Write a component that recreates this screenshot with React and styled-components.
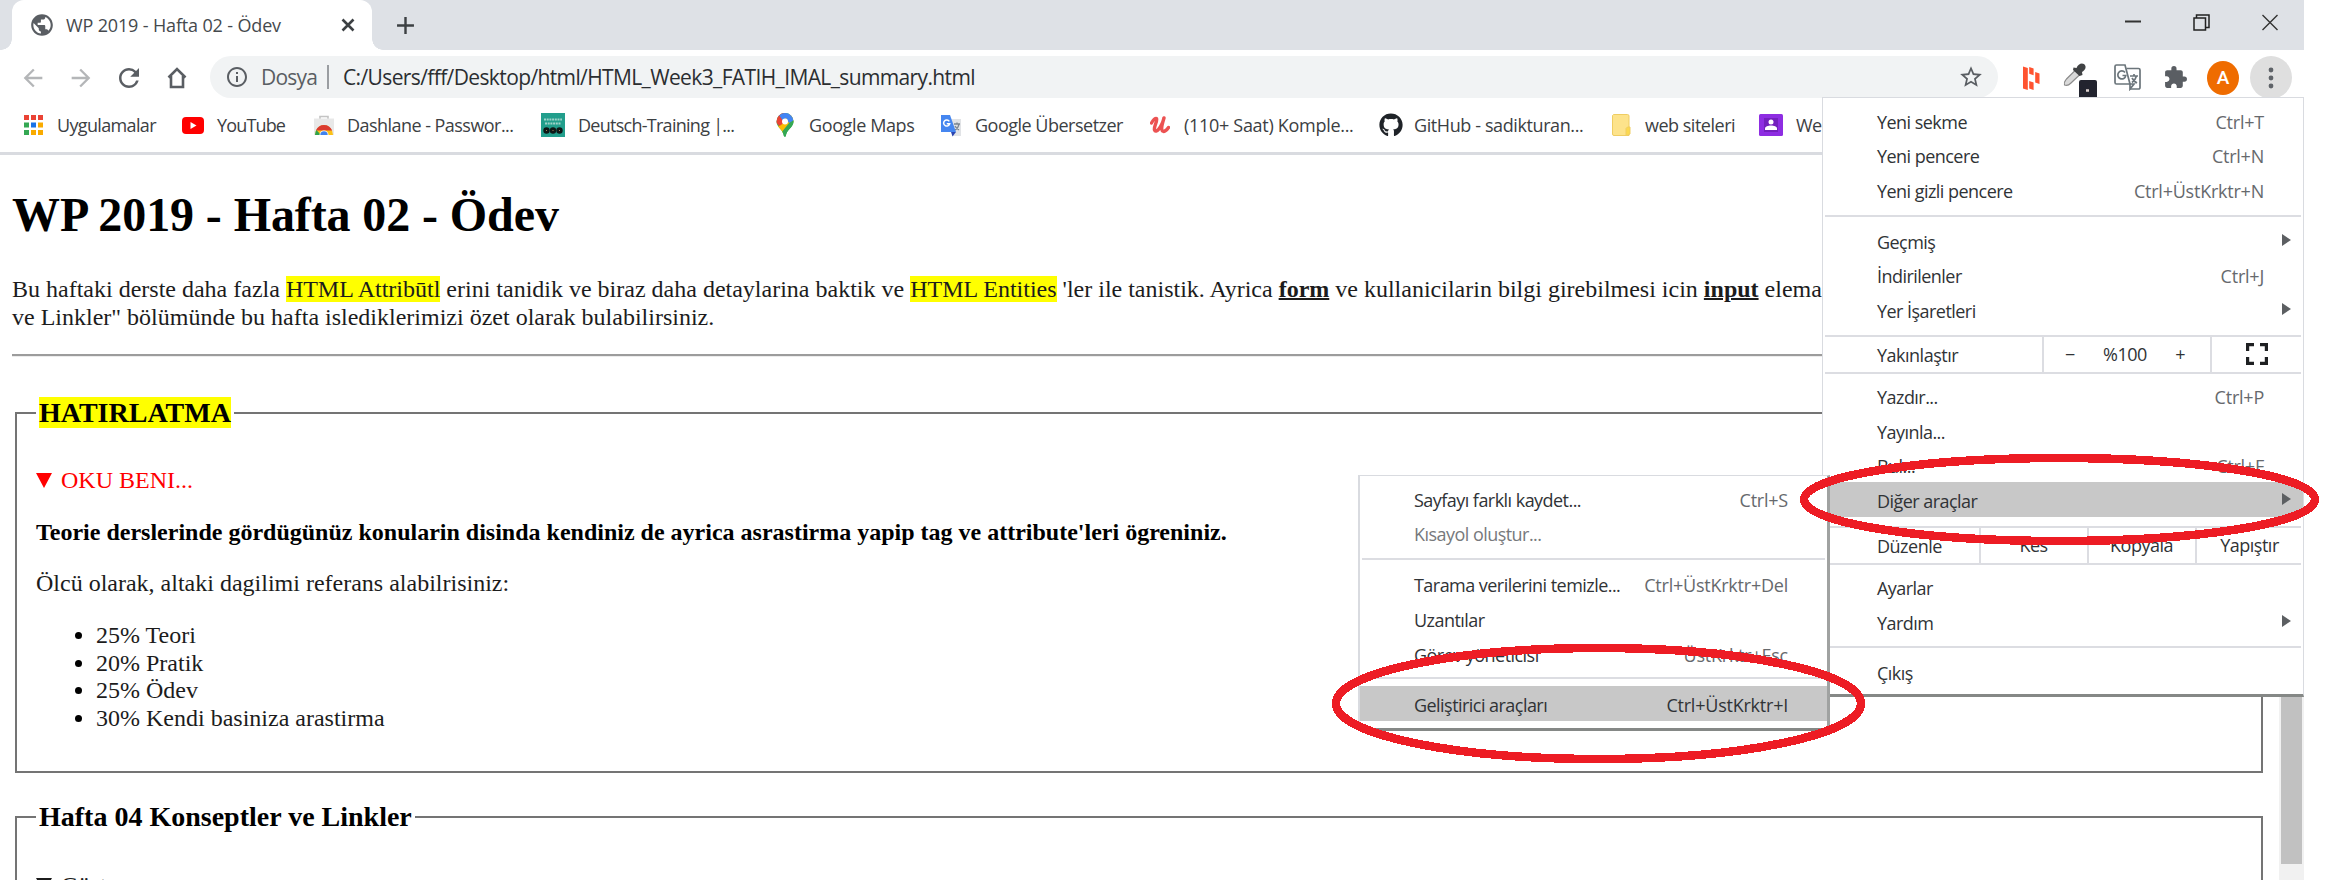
import React from 'react';
import styled, { createGlobalStyle } from 'styled-components';
import {
  MdPublic, MdArrowBack, MdArrowForward, MdRefresh, MdInfoOutline, MdStarBorder,
  MdExtension, MdAdd,
} from 'react-icons/md';
import { FaGithub } from 'react-icons/fa';

const GlobalStyle = createGlobalStyle`
  * { box-sizing: border-box; }
  body { margin: 0; background: #fff; overflow: hidden; }
`;

const ui = '"Open Sans", "Noto Sans", sans-serif';

const Screen = styled.div`
  position: relative;
  width: 2340px;
  height: 880px;
  overflow: hidden;
  background: #fff;
`;

const Browser = styled.div`
  display: flex;
  flex-direction: column;
  width: 2304px;
  height: 880px;
  font-family: ${ui};
  color: #3c4043;
`;

/* ---------- tab strip ---------- */

const TabStrip = styled.header`
  display: flex;
  align-items: center;
  flex: none;
  height: 50px;
  padding-left: 12px;
  background: #dee1e6;
`;

const Tab = styled.div`
  position: relative;
  display: flex;
  align-items: center;
  width: 360px;
  height: 50px;
  padding: 0 17px 0 17px;
  border-radius: 12px 12px 0 0;
  background: #fff;
  color: #45494d;

  &::before, &::after {
    content: '';
    position: absolute;
    bottom: 0;
    width: 11px;
    height: 11px;
  }
  &::before { left: -11px; background: radial-gradient(circle at 0 0, #dee1e6 10.5px, #fff 11px); }
  &::after { right: -11px; background: radial-gradient(circle at 100% 0, #dee1e6 10.5px, #fff 11px); }
`;

const TabTitle = styled.span`
  flex: 1;
  margin-left: 11px;
  padding-bottom: 1px;
  font-size: 18px;
  letter-spacing: -0.15px;
  white-space: nowrap;
`;

const NewTab = styled.div`
  display: flex;
  margin-left: 19px;
  color: #3c4043;
`;

const WindowControls = styled.div`
  display: flex;
  gap: 52px;
  margin-left: auto;
  margin-right: 26px;
  align-items: center;
  padding-bottom: 6px;
`;

/* ---------- toolbar ---------- */

const Toolbar = styled.div`
  display: flex;
  flex: none;
  height: 49px;
  padding: 6px 9px 0;
`;

const ToolButton = styled.div`
  display: flex;
  align-items: center;
  justify-content: center;
  flex: none;
  width: 48px;
  height: 43px;
  color: ${(p) => (p.$dim ? '#b4b6b8' : '#5a5e63')};
`;

const Omnibox = styled.div`
  display: flex;
  align-items: center;
  flex: none;
  width: 1788px;
  height: 42px;
  margin: 0 9px;
  padding: 0 14px 0 15px;
  border-radius: 21px;
  background: #f1f3f4;
  color: #5a5e63;
  font-size: 21px;
`;

const Scheme = styled.span`
  width: 66px;
  margin-left: 12px;
  letter-spacing: -0.8px;
`;

const Divider = styled.i`
  width: 2px;
  height: 24px;
  background: #9a9da1;
`;

const Address = styled.span`
  flex: 1;
  margin-left: 14px;
  color: #2b2e31;
  letter-spacing: -0.62px;
`;

const Avatar = styled.div`
  display: flex;
  align-items: center;
  justify-content: center;
  width: 32px;
  height: 34px;
  border-radius: 50%;
  background: #ef6c00;
  color: #fff;
  font: 500 19px Roboto, sans-serif;
`;

const MenuTrigger = styled.div`
  display: flex;
  align-items: center;
  justify-content: center;
  flex: none;
  width: 42px;
  height: 43px;
  border-radius: 50%;
  background: #dfdfdf;
`;

/* ---------- bookmarks ---------- */

const BookmarkBar = styled.nav`
  display: flex;
  align-items: center;
  flex: none;
  height: 56px;
  padding: 0 0 1px 24px;
  border-bottom: 3px solid #d9dbe0;
`;

const Bookmark = styled.div`
  display: flex;
  align-items: center;
  flex: none;
  width: ${(p) => p.$width}px;
  font-size: 18px;
  letter-spacing: ${(p) => p.$track}px;
  white-space: nowrap;
`;

const BookmarkIcon = styled.span`
  display: flex;
  flex: none;
  width: ${(p) => p.$slot}px;
`;

/* ---------- document ---------- */

const Viewport = styled.div`
  display: flex;
  flex: 1;
  min-height: 0;
  overflow: hidden;
`;

const Document = styled.main`
  flex: 1;
  padding: 32px 6px 0 12px;
  color: #000;
  font: 24px/27.7px "Liberation Serif", serif;
`;

const Title = styled.h1`
  margin: 0 0 33px;
  font-size: 48px;
  line-height: 56px;
  letter-spacing: -0.1px;
`;

const Paragraph = styled.p`
  margin: 24px 0;
  color: ${(p) => (p.$strong ? '#000' : '#1c1c1c')};
  font-weight: ${(p) => (p.$strong ? 'bold' : 'normal')};
  white-space: nowrap;
`;

const Mark = styled.mark`
  background: #ff0;
  color: inherit;
`;

const Key = styled.b`
  text-decoration: underline;
  text-decoration-thickness: 2px;
`;

const Rule = styled.hr`
  height: 3px;
  margin: -1px 0 40px;
  border: 0;
  border-top: 2px solid #9c9c9c;
  background: #ececec;
`;

const Section = styled.fieldset`
  width: 2248px;
  margin: 0 0 28px 3px;
  padding: 37.5px 19px 14px;
  border: 2px solid #747474;
`;

const Legend = styled.legend`
  padding: 0 3px;
  font-size: 28px;
  font-weight: bold;
  line-height: 32px;
`;

const Summary = styled.div`
  display: flex;
  align-items: center;
  gap: 9px;
  padding-top: ${(p) => p.$offset || 0}px;
  color: ${(p) => p.$color};
`;

const Caret = styled.i`
  margin-bottom: 1px;
  border: 8.5px solid transparent;
  border-top: 15px solid currentColor;
  border-bottom: 0;
`;

const List = styled.ul`
  margin: 24px 0;
  padding-left: 60px;
  color: #1c1c1c;
  li::marker { color: #000; }
`;

const Scrollbar = styled.aside`
  flex: none;
  width: 25px;
  padding: 0 2px;
  background: #f1f1f1;
`;

const Thumb = styled.div`
  height: 709px;
  background: #c1c1c1;
`;

/* ---------- menus ---------- */

const Menu = styled.div`
  position: absolute;
  left: 1822px;
  top: 97px;
  width: 482px;
  height: 600px;
  padding-top: 5px;
  border: 1px solid #d9dbe0;
  border-bottom: 3px solid #858886;
  background: #fff;
  font: 18px ${ui};
  color: #303336;
`;

const SubMenu = styled(Menu)`
  left: 1358px;
  top: 475px;
  width: 472px;
  height: 256px;
  border-width: 1px 3px 3px 2px;
  border-right-color: #a0a2a1;
`;

const MenuItem = styled.div`
  display: flex;
  align-items: center;
  height: 34.6px;
  padding: 3px 39px 0 54px;
  background: ${(p) => (p.$active ? '#c8c8c8' : 'transparent')};
  color: ${(p) => (p.$disabled ? '#77797c' : 'inherit')};
  letter-spacing: -0.54px;
  white-space: nowrap;
`;

const Shortcut = styled.span`
  margin-left: auto;
  color: ${(p) => (p.$active ? '#303336' : '#66696d')};
  letter-spacing: -0.23px;
`;

const Arrow = styled.i`
  margin: 0 -27px 3px auto;
  border: 6px solid transparent;
  border-left: 9px solid #5c5f62;
  border-right: 0;
`;

const Separator = styled.div`
  height: 2px;
  margin: ${(p) => p.$above}px 2px ${(p) => p.$below}px;
  background: #dcdde2;
`;

const ActionRow = styled.div`
  display: grid;
  grid-template-columns: ${(p) => p.$columns};
  height: ${(p) => p.$height}px;
  padding-left: 2px;
  letter-spacing: -0.5px;
`;

const ActionLabel = styled.span`
  display: flex;
  align-items: center;
  padding: 1px 0 0 52px;
`;

const ActionCell = styled.span`
  display: flex;
  align-items: center;
  justify-content: ${(p) => (p.$spread ? 'space-between' : 'center')};
  padding: 0 ${(p) => (p.$spread ? '25px 1px 21px' : '1px 1px 0')};
  border-left: 2px solid #dcdde2;
`;

const Annotations = styled.svg`
  position: absolute;
  inset: 0;
  pointer-events: none;
`;

/* ---------- icons ---------- */

const TabCloseIcon = () => (
  <svg width="14" height="14" viewBox="0 0 14 14">
    <path d="m1.500 1.500 11 11m0-11-11 11" stroke="#3c4043" strokeWidth="2.600" />
  </svg>
);

const HomeIcon = () => (
  <svg width="20" height="22" viewBox="0 0 20 22">
    <path d="M1.500 10.500 10 2l8.500 8.500M4 9v11h12V9" fill="none" stroke="#5a5e63" strokeWidth="2.600" />
  </svg>
);

const AppsIcon = () => {
  const colors = ['#ea4335', '#ea4335', '#ea4335', '#34a853', '#1a73e8', '#f9ab00', '#34a853', '#f9ab00', '#f9ab00'];
  return (
    <svg width="19" height="20" viewBox="0 0 19 20">
      {colors.map((c, i) => <rect key={i} x={(i % 3) * 7} y={Math.floor(i / 3) * 7.5} width="5" height="5" fill={c} />)}
    </svg>
  );
};

const YouTubeIcon = () => (
  <svg width="22" height="17" viewBox="0 0 22 17">
    <rect width="22" height="17" rx="4" fill="#f00" />
    <path d="M8.500 5v7l6-3.500z" fill="#fff" />
  </svg>
);

const StoreIcon = () => (
  <svg width="20" height="20" viewBox="0 0 20 20">
    <path d="M6 4V1.500h8V4" fill="none" stroke="#c4c4c4" strokeWidth="1.600" />
    <path d="M0 3.500h20V20H0z" fill="#e8e8e8" />
    <path d="M1 20a9 10 0 0 1 18 0z" fill="#fbc116" />
    <path d="M1.800 15.500a9 9.500 0 0 1 16.400 0h-8z" fill="#db3a2f" />
    <path d="M1 20a9 9.500 0 0 1 1.400-5L7 20z" fill="#2fa24c" />
    <path d="M5.500 20a4.500 4.500 0 0 1 9 0z" fill="#fff" />
    <path d="M6.300 20a3.700 3.700 0 0 1 7.400 0z" fill="#3f82ee" />
  </svg>
);

const TrainingIcon = () => (
  <svg width="24" height="24" viewBox="0 0 24 24">
    <rect width="24" height="24" fill="#229e8c" />
    <path d="M3 6.500h18M4 10.500h16" stroke="#9fd2c8" strokeWidth="2" strokeDasharray="2 .7" />
    <circle cx="5.500" cy="17.500" r="3.200" fill="#0d1716" />
    <circle cx="12" cy="17.500" r="3.200" fill="#0d1716" />
    <circle cx="18.500" cy="17.500" r="3.200" fill="#0d1716" />
    <path d="M5 17.500h1M11.500 17.500h1M18 17.500h1" stroke="#a9835e" strokeWidth="1.200" />
  </svg>
);

const PIN = 'M9 0a8.500 8.500 0 0 0-8.500 8.500C.500 14.500 7 16 8 23.500h1.700C10.700 16 17.500 14.500 17.500 8.500A8.500 8.500 0 0 0 9 0z';
const MapsIcon = () => (
  <svg width="18" height="24" viewBox="0 0 18 24">
    <clipPath id="pin"><path d={PIN} /></clipPath>
    <g clipPath="url(#pin)">
      <path d="M0 0h18v24H0z" fill="#34a853" />
      <path d="M-1 17 12 2 20 -2v9L3 24z" fill="#fbbc04" />
      <path d="M5 20 18 4v20H5z" fill="#34a853" />
      <path d="M0 0h9v9L3.500 13-2 8z" fill="#ea4335" />
      <path d="M3 2 9-1h9v8l-5 3-3-5-3 3z" fill="#4285f4" />
    </g>
    <circle cx="9" cy="8.500" r="3" fill="#fff" />
  </svg>
);

const TranslateIcon = () => (
  <svg width="22" height="23" viewBox="0 0 22 23">
    <path d="M9 5h12v17H13z" fill="#e1e3e6" />
    <path d="M14 10h6m-3-1.500V10m2 0c-.5 3-2 5-4 6m0-4c1 2 2.500 3 4 4" fill="none" stroke="#7b858f" strokeWidth="1.300" />
    <path d="M1 1h9l6 17H1z" fill="#4586f0" />
    <path d="m11 18 5 0-3.500 4.500z" fill="#2b45b0" />
    <path d="M9.300 7.300A3.100 3.100 0 1 0 9.700 9.800H6.800" fill="none" stroke="#fff" strokeWidth="1.500" />
  </svg>
);

const UdemyIcon = () => (
  <svg width="20" height="18" viewBox="0 0 20 18">
    <path d="M1.500 7C3 4.500 5 2 6.500 2.500 8 4 3.500 11 4.500 14c1.200 3.500 7-2 9.500-12-1.500 5-3.500 11-1.500 13 1.500 1.200 4-.5 6-3.500" fill="none" stroke="#ec5252" strokeWidth="3.400" strokeLinecap="round" strokeLinejoin="round" />
  </svg>
);

const FolderIcon = () => (
  <svg width="19" height="22" viewBox="0 0 19 22">
    <path d="M1.500.500h14a1.500 1.500 0 0 1 1.500 1.500v19.500h-15A1.500 1.500 0 0 1 .500 20V1.500z" fill="#fde38b" stroke="#efcd62" />
    <path d="M14 21.500v-7l1.500-1.500H18v7z" fill="#fcd94f" stroke="#efcd62" />
  </svg>
);

const ContactIcon = () => (
  <svg width="24" height="22" viewBox="0 0 24 22">
    <rect width="24" height="22" rx="1.500" fill="#8e2de2" />
    <rect x="5" y="4" width="14" height="14" fill="#7420bd" />
    <circle cx="12" cy="8" r="2.500" fill="#fff" />
    <path d="M6 16v-1.500c0-4 12-4 12 0V16z" fill="#fff" />
  </svg>
);

const BarsIcon = () => (
  <svg width="17" height="24" viewBox="0 0 17 24" fill="#ff5330">
    <path d="M0 .500 4.800 2v22L0 22.500zM6.200 1l4.400 1.400v6.800L6.200 7.800zM6.200 15l4.400 1.400V24l-4.400-1.400zM12.200 6l4.300 1.400V18l-4.300-1.400z" />
  </svg>
);

const PickerIcon = () => (
  <svg width="36" height="38" viewBox="3 0 36 38">
    <path d="M6.500 26c-1-3 .5-4 2-6l9-9 4.500 4.500-9 8.500c-2 2-4 3-6.500 2z" fill="#d9d9d9" stroke="#8b8b8b" strokeWidth="1.200" />
    <path d="m15.500 8.500 3 .500c1.500-4 5-5.500 7.500-4 3 2.500 1.500 6-2 8l.5 3-3 1-6.500-6z" fill="#404244" />
    <path d="M21 23a2 2 0 0 1 2-2h14a2 2 0 0 1 2 2V38H21z" fill="#22242f" />
    <path d="M28 31.500h3" stroke="#dfd3d0" strokeWidth="2.500" />
  </svg>
);

const TranslatePageIcon = () => (
  <svg width="27" height="27" viewBox="0 0 27 27" fill="none" stroke="#6b757b" strokeWidth="1.700">
    <path d="M12.500 4.500h12A1.500 1.500 0 0 1 26 6v17.500a1.500 1.500 0 0 1-1.500 1.500H16" />
    <path d="M2.500 1H11l5 19H2.500A1.500 1.500 0 0 1 1 18.500v-16A1.500 1.500 0 0 1 2.500 1zM16 20v5l4-5z" />
    <path d="M11 8.500a4 4 0 1 0 .8 3H8.500M16 12h8m-4-2v2m2.500 0c-.8 3-2.500 5-4.500 6.500m0-4.500c1 2 3 4 5 5" />
  </svg>
);

const MinimizeIcon = () => (
  <svg width="16" height="17" viewBox="0 0 16 17"><path d="M0 7.500h16" stroke="#333" strokeWidth="2" /></svg>
);
const RestoreIcon = () => (
  <svg width="17" height="17" viewBox="0 0 17 17" fill="none" stroke="#222" strokeWidth="1.500">
    <path d="M1 4h11.500v12H1zM3.500 4V1h12.500v12.500h-3.500" />
  </svg>
);
const CloseIcon = () => (
  <svg width="16" height="17" viewBox="0 0 16 17"><path d="m.5 1 15 15m0-15-15 15" stroke="#333" strokeWidth="1.400" /></svg>
);
const DotsIcon = () => (
  <svg width="6" height="22" viewBox="0 0 6 22" fill="#5f6368">
    <circle cx="3" cy="3" r="2.400" /><circle cx="3" cy="11" r="2.400" /><circle cx="3" cy="19" r="2.400" />
  </svg>
);
const FullscreenIcon = () => (
  <svg width="22" height="22" viewBox="0 0 22 22">
    <path d="M1.500 8V1.500H8M14 1.500h6.500V8M20.500 14v6.500H14M8 20.500H1.500V14" fill="none" stroke="#1e2022" strokeWidth="3.400" />
  </svg>
);

/* ---------- data ---------- */

const bookmarks = [
  { label: 'Uygulamalar', icon: <AppsIcon />, width: 158, slot: 33, track: -0.65 },
  { label: 'YouTube', icon: <YouTubeIcon />, width: 132, slot: 35, track: -0.85 },
  { label: 'Dashlane - Passwor...', icon: <StoreIcon />, width: 227, slot: 33, track: -0.54 },
  { label: 'Deutsch-Training |...', icon: <TrainingIcon />, width: 235, slot: 37, track: -0.73 },
  { label: 'Google Maps', icon: <MapsIcon />, width: 164, slot: 33, track: -0.38 },
  { label: 'Google Übersetzer', icon: <TranslateIcon />, width: 210, slot: 35, track: -0.5 },
  { label: '(110+ Saat) Komple...', icon: <UdemyIcon />, width: 229, slot: 34, track: -0.3 },
  { label: 'GitHub - sadikturan...', icon: <FaGithub size={24} color="#1f2328" />, width: 233, slot: 35, track: -0.4 },
  { label: 'web siteleri', icon: <FolderIcon />, width: 147, slot: 33, track: -0.49 },
  { label: 'We', icon: <ContactIcon />, width: 70, slot: 37, track: -0.6 },
];

const Item = ({ label, keys, arrow, active, disabled }) => (
  <MenuItem $active={active} $disabled={disabled}>
    {label}
    {keys && <Shortcut $active={active}>{keys}</Shortcut>}
    {arrow && <Arrow />}
  </MenuItem>
);

export default function App() {
  return (
    <Screen>
      <GlobalStyle />
      <Browser>
        <TabStrip>
          <Tab>
            <MdPublic size={26} color="#5a5e63" />
            <TabTitle>WP 2019 - Hafta 02 - Ödev</TabTitle>
            <TabCloseIcon />
          </Tab>
          <NewTab><MdAdd size={29} /></NewTab>
          <WindowControls><MinimizeIcon /><RestoreIcon /><CloseIcon /></WindowControls>
        </TabStrip>

        <Toolbar>
          <ToolButton $dim><MdArrowBack size={28} /></ToolButton>
          <ToolButton $dim><MdArrowForward size={28} /></ToolButton>
          <ToolButton><MdRefresh size={30} /></ToolButton>
          <ToolButton><HomeIcon /></ToolButton>
          <Omnibox>
            <MdInfoOutline size={24} />
            <Scheme>Dosya</Scheme>
            <Divider />
            <Address>C:/Users/fff/Desktop/html/HTML_Week3_FATIH_IMAL_summary.html</Address>
            <MdStarBorder size={26} />
          </Omnibox>
          <ToolButton><BarsIcon /></ToolButton>
          <ToolButton><PickerIcon /></ToolButton>
          <ToolButton><TranslatePageIcon /></ToolButton>
          <ToolButton><MdExtension size={25} /></ToolButton>
          <ToolButton><Avatar>A</Avatar></ToolButton>
          <ToolButton><MenuTrigger><DotsIcon /></MenuTrigger></ToolButton>
        </Toolbar>

        <BookmarkBar>
          {bookmarks.map((b) => (
            <Bookmark key={b.label} $width={b.width} $track={b.track}>
              <BookmarkIcon $slot={b.slot}>{b.icon}</BookmarkIcon>
              {b.label}
            </Bookmark>
          ))}
        </BookmarkBar>

        <Viewport>
          <Document>
            <Title>WP 2019 - Hafta 02 - Ödev</Title>
            <Paragraph>
              Bu haftaki derste daha fazla <Mark>HTML Attribūtl</Mark> erini tanidik ve biraz daha detaylarina baktik
              ve <Mark>HTML Entities</Mark> 'ler ile tanistik. Ayrica <Key>form</Key> ve kullanicilarin bilgi
              girebilmesi icin <Key>input</Key> elema
              <br />
              ve Linkler" bölümünde bu hafta islediklerimizi özet olarak bulabilirsiniz.
            </Paragraph>
            <Rule />
            <Section>
              <Legend><Mark>HATIRLATMA</Mark></Legend>
              <Summary $color="#f00"><Caret />OKU BENI...</Summary>
              <Paragraph $strong>
                Teorie derslerinde gördügünüz konularin disinda kendiniz de ayrica asrastirma yapip tag ve
                attribute'leri ögreniniz.
              </Paragraph>
              <Paragraph>Ölcü olarak, altaki dagilimi referans alabilrisiniz:</Paragraph>
              <List>
                <li>25% Teori</li>
                <li>20% Pratik</li>
                <li>25% Ödev</li>
                <li>30% Kendi basiniza arastirma</li>
              </List>
            </Section>
            <Section>
              <Legend>Hafta 04 Konseptler ve Linkler</Legend>
              <Summary $color="#1c1c1c" $offset={1.5}><Caret />Göster</Summary>
            </Section>
          </Document>
          <Scrollbar><Thumb /></Scrollbar>
        </Viewport>
      </Browser>

      <Menu>
        <Item label="Yeni sekme" keys="Ctrl+T" />
        <Item label="Yeni pencere" keys="Ctrl+N" />
        <Item label="Yeni gizli pencere" keys="Ctrl+ÜstKrktr+N" />
        <Separator $above={8} $below={6} />
        <Item label="Geçmiş" arrow />
        <Item label="İndirilenler" keys="Ctrl+J" />
        <Item label="Yer İşaretleri" arrow />
        <Separator $above={8.2} $below={0} />
        <ActionRow $columns="217px 168px 1fr" $height={35.5}>
          <ActionLabel>Yakınlaştır</ActionLabel>
          <ActionCell $spread><span>−</span><span>%100</span><span>+</span></ActionCell>
          <ActionCell><FullscreenIcon /></ActionCell>
        </ActionRow>
        <Separator $above={0} $below={4} />
        <Item label="Yazdır..." keys="Ctrl+P" />
        <Item label="Yayınla..." />
        <Item label="Bul..." keys="Ctrl+F" />
        <Item label="Diğer araçlar" arrow active />
        <Separator $above={9.5} $below={0} />
        <ActionRow $columns="154px 108px 108px 1fr" $height={35}>
          <ActionLabel>Düzenle</ActionLabel>
          <ActionCell>Kes</ActionCell>
          <ActionCell>Kopyala</ActionCell>
          <ActionCell>Yapıştır</ActionCell>
        </ActionRow>
        <Separator $above={0} $below={4} />
        <Item label="Ayarlar" />
        <Item label="Yardım" arrow />
        <Separator $above={7.5} $below={6.5} />
        <Item label="Çıkış" />
      </Menu>

      <SubMenu>
        <Item label="Sayfayı farklı kaydet..." keys="Ctrl+S" />
        <Item label="Kısayol oluştur..." disabled />
        <Separator $above={7.5} $below={7} />
        <Item label="Tarama verilerini temizle..." keys="Ctrl+ÜstKrktr+Del" />
        <Item label="Uzantılar" />
        <Item label="Görev yöneticisi" keys="ÜstKrktr+Esc" />
        <Separator $above={7} $below={7} />
        <Item label="Geliştirici araçları" keys="Ctrl+ÜstKrktr+I" active />
      </SubMenu>

      <Annotations width="2340" height="880" fill="none" stroke="#ed1c24" strokeWidth="8.5" shapeRendering="crispEdges">
        <ellipse cx="2059.5" cy="499.5" rx="255.5" ry="41.5" />
        <ellipse cx="1598.5" cy="703.5" rx="262.5" ry="55.5" />
      </Annotations>
    </Screen>
  );
}
